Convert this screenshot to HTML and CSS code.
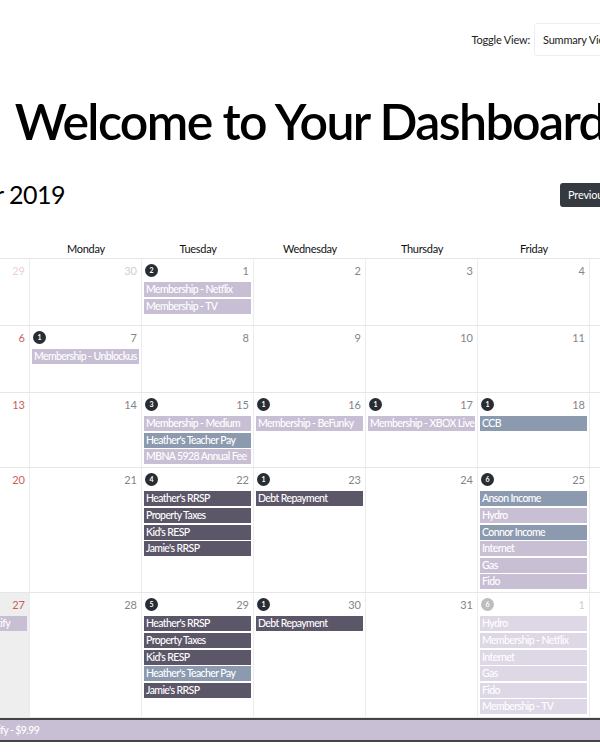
FILE: index.html
```html
<!DOCTYPE html>
<html lang="en">
<head>
<meta charset="utf-8">
<title>Dashboard</title>
<link rel="stylesheet" href="styles.css">
</head>
<body>
<div class="page">
  <div class="toolbar">
    <label class="toggle-label" for="view">Toggle View:</label>
    <div class="select" id="view">Summary View</div>
  </div>

  <h1 class="title">Welcome to Your Dashboard</h1>

  <div class="month-row">
    <h2 class="month">October 2019</h2>
    <div class="btn-group">
      <button class="btn">Previous</button>
      <button class="btn">Today</button>
      <button class="btn">Next</button>
    </div>
  </div>

  <div class="calendar">
    <div class="dow">Sunday</div>
    <div class="dow">Monday</div>
    <div class="dow">Tuesday</div>
    <div class="dow">Wednesday</div>
    <div class="dow">Thursday</div>
    <div class="dow">Friday</div>
    <div class="dow">Saturday</div>

    <!-- week 1 -->
    <div class="cell other sun"><div class="head"><span class="date">29</span></div></div>
    <div class="cell other"><div class="head"><span class="date">30</span></div></div>
    <div class="cell"><div class="head"><span class="badge">2</span><span class="date">1</span></div>
      <div class="ev lilac">Membership - Netflix</div>
      <div class="ev lilac">Membership - TV</div>
    </div>
    <div class="cell"><div class="head"><span class="date">2</span></div></div>
    <div class="cell"><div class="head"><span class="date">3</span></div></div>
    <div class="cell"><div class="head"><span class="date">4</span></div></div>
    <div class="cell"><div class="head"><span class="date">5</span></div></div>

    <!-- week 2 -->
    <div class="cell sun"><div class="head"><span class="date">6</span></div></div>
    <div class="cell"><div class="head"><span class="badge">1</span><span class="date">7</span></div>
      <div class="ev lilac">Membership - Unblockus</div>
    </div>
    <div class="cell"><div class="head"><span class="date">8</span></div></div>
    <div class="cell"><div class="head"><span class="date">9</span></div></div>
    <div class="cell"><div class="head"><span class="date">10</span></div></div>
    <div class="cell"><div class="head"><span class="date">11</span></div></div>
    <div class="cell"><div class="head"><span class="date">12</span></div></div>

    <!-- week 3 -->
    <div class="cell sun"><div class="head"><span class="date">13</span></div></div>
    <div class="cell"><div class="head"><span class="date">14</span></div></div>
    <div class="cell"><div class="head"><span class="badge">3</span><span class="date">15</span></div>
      <div class="ev lilac">Membership - Medium</div>
      <div class="ev slate">Heather's Teacher Pay</div>
      <div class="ev lilac">MBNA 5928 Annual Fee</div>
    </div>
    <div class="cell"><div class="head"><span class="badge">1</span><span class="date">16</span></div>
      <div class="ev lilac">Membership - BeFunky</div>
    </div>
    <div class="cell"><div class="head"><span class="badge">1</span><span class="date">17</span></div>
      <div class="ev lilac">Membership - XBOX Live</div>
    </div>
    <div class="cell"><div class="head"><span class="badge">1</span><span class="date">18</span></div>
      <div class="ev slate">CCB</div>
    </div>
    <div class="cell"><div class="head"><span class="date">19</span></div></div>

    <!-- week 4 -->
    <div class="cell sun"><div class="head"><span class="date">20</span></div></div>
    <div class="cell"><div class="head"><span class="date">21</span></div></div>
    <div class="cell"><div class="head"><span class="badge">4</span><span class="date">22</span></div>
      <div class="ev dark">Heather's RRSP</div>
      <div class="ev dark">Property Taxes</div>
      <div class="ev dark">Kid's RESP</div>
      <div class="ev dark">Jamie's RRSP</div>
    </div>
    <div class="cell"><div class="head"><span class="badge">1</span><span class="date">23</span></div>
      <div class="ev dark">Debt Repayment</div>
    </div>
    <div class="cell"><div class="head"><span class="date">24</span></div></div>
    <div class="cell"><div class="head"><span class="badge">6</span><span class="date">25</span></div>
      <div class="ev slate">Anson Income</div>
      <div class="ev lilac">Hydro</div>
      <div class="ev slate">Connor Income</div>
      <div class="ev lilac">Internet</div>
      <div class="ev lilac">Gas</div>
      <div class="ev lilac">Fido</div>
    </div>
    <div class="cell"><div class="head"><span class="date">26</span></div></div>

    <!-- week 5 -->
    <div class="cell sun active"><div class="head"><span class="badge">1</span><span class="date">27</span></div>
      <div class="ev lilac">Membership - Spotify</div>
    </div>
    <div class="cell"><div class="head"><span class="date">28</span></div></div>
    <div class="cell"><div class="head"><span class="badge">5</span><span class="date">29</span></div>
      <div class="ev dark">Heather's RRSP</div>
      <div class="ev dark">Property Taxes</div>
      <div class="ev dark">Kid's RESP</div>
      <div class="ev slate">Heather's Teacher Pay</div>
      <div class="ev dark">Jamie's RRSP</div>
    </div>
    <div class="cell"><div class="head"><span class="badge">1</span><span class="date">30</span></div>
      <div class="ev dark">Debt Repayment</div>
    </div>
    <div class="cell"><div class="head"><span class="date">31</span></div></div>
    <div class="cell other"><div class="head"><span class="badge faded">6</span><span class="date">1</span></div>
      <div class="ev faded">Hydro</div>
      <div class="ev faded">Membership - Netflix</div>
      <div class="ev faded">Internet</div>
      <div class="ev faded">Gas</div>
      <div class="ev faded">Fido</div>
      <div class="ev faded">Membership - TV</div>
    </div>
    <div class="cell other"><div class="head"><span class="date">2</span></div></div>
  </div>

  <div class="detail-bar">Membership - Spotify - $9.99</div>
</div>
</body>
</html>
```

FILE: styles.css
```css
html, body {
  margin: 0;
  padding: 0;
  background: #fff;
  overflow: hidden;
}

body {
  font-family: "Lato", "Noto Sans", sans-serif;
  color: #111;
}

.page {
  width: 784px;
  margin-left: -82px;
}

/* toolbar */
.toolbar {
  display: flex;
  justify-content: flex-end;
  align-items: center;
  gap: 4px;
  padding-top: 23px;
  padding-right: 28px;
}

.toggle-label {
  font-size: 11px;
  color: #222;
  letter-spacing: -0.2px;
}

.select {
  box-sizing: border-box;
  width: 140px;
  height: 33px;
  line-height: 31px;
  padding-left: 8px;
  border: 1px solid #eceef0;
  border-radius: 3px;
  font-size: 11px;
  color: #222;
  white-space: nowrap;
  letter-spacing: -0.2px;
}

/* title */
.title {
  margin: 35px 0 0;
  font-size: 50px;
  font-weight: 600;
  line-height: 1.2;
  letter-spacing: -1.6px;
  text-align: center;
  color: #000;
  white-space: nowrap;
}

.month-row {
  display: flex;
  justify-content: space-between;
  align-items: center;
  margin-top: 28px;
}

.month {
  margin: 0 0 0 -2px;
  font-size: 25px;
  font-weight: 400;
  line-height: 1.25;
  letter-spacing: -0.5px;
  color: #000;
}

.btn-group {
  display: flex;
  margin-right: 2px;
}

.btn {
  height: 24px;
  padding: 0 8px;
  border: 0;
  border-right: 1px solid #23272b;
  background: #343a40;
  color: #fff;
  font-family: "Lato", sans-serif;
  font-size: 11px;
  letter-spacing: -0.2px;
}

.btn:first-child {
  border-radius: 3px 0 0 3px;
}

.btn:last-child {
  border-right: 0;
  border-radius: 0 3px 3px 0;
}

/* calendar */
.calendar {
  display: grid;
  grid-template-columns: repeat(7, 112px);
  margin-top: 29px;
}

.dow {
  height: 19px;
  line-height: 20px;
  font-size: 11px;
  letter-spacing: -0.3px;
  text-align: center;
  color: #111;
  border-bottom: 1px solid #e6e6e6;
}

.cell {
  box-sizing: border-box;
  min-height: 67px;
  padding: 0 2px 3px 2px;
  border-right: 1px solid #ececec;
  border-bottom: 1px solid #e6e6e6;
  background: #fff;
}

.cell.active {
  background: #eeeeee;
}

.head {
  display: flex;
  justify-content: space-between;
  align-items: center;
  height: 23px;
  padding: 0 2px 1px 1px;
  box-sizing: border-box;
}

.date {
  margin-left: auto;
  font-size: 11px;
  color: #858585;
}

.sun .date {
  color: #c9605c;
}

.other .date {
  color: #cfcfcf;
}

.other.sun .date {
  color: #efcfcf;
}

.badge {
  display: flex;
  align-items: center;
  justify-content: center;
  width: 13px;
  height: 13px;
  border-radius: 50%;
  background: #282c33;
  color: #fff;
  font-size: 7px;
  font-weight: 700;
}

.badge.faded {
  background: #bdbdbd;
}

.ev {
  height: 15px;
  line-height: 15px;
  margin-bottom: 1.6px;
  padding: 0 2px;
  font-size: 10.5px;
  font-weight: 500;
  letter-spacing: -0.6px;
  color: #fff;
  white-space: nowrap;
  overflow: hidden;
}

.ev:last-child {
  margin-bottom: 0;
}

.ev.lilac {
  background: #c8bfd5;
}

.ev.slate {
  background: #8c9ab0;
}

.ev.dark {
  background: #5c5669;
}

.ev.faded {
  background: #ded7e5;
}

.detail-bar {
  box-sizing: border-box;
  width: 800px;
  height: 24px;
  line-height: 20px;
  padding-left: 2px;
  border-top: 2px solid #444;
  border-bottom: 2px solid #444;
  background: #c8bfd5;
  color: #fff;
  font-size: 10.5px;
  font-weight: 500;
  letter-spacing: -0.6px;
}
```
